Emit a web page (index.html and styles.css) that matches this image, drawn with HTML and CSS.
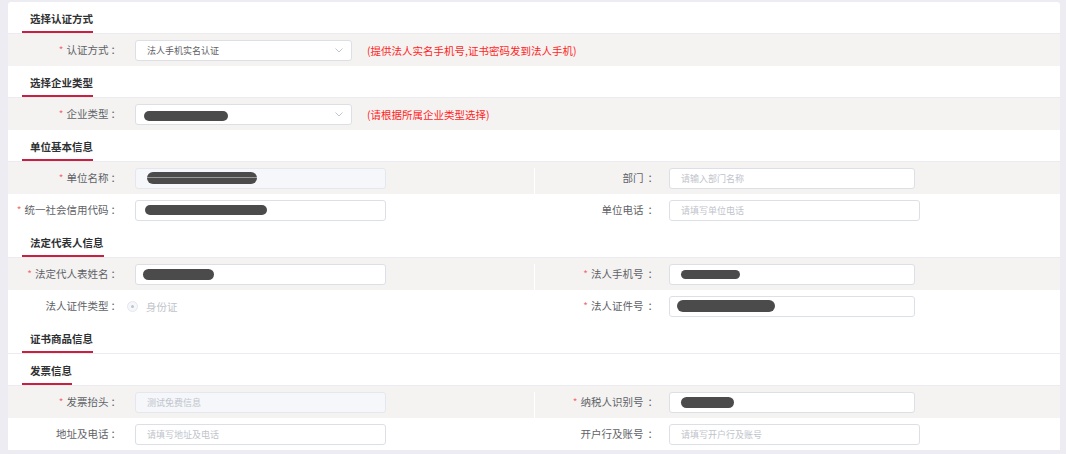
FILE: index.html
```html
<!DOCTYPE html>
<html lang="zh-CN">
<head>
<meta charset="utf-8">
<title>证书申请</title>
<link rel="stylesheet" href="styles.css">
</head>
<body>
<div class="page">
  <div class="card">
    <div class="sec"><h3 class="sec-title">选择认证方式</h3></div>
    <div class="row gray">
      <div class="cell">
        <label class="lbl"><i class="req">*</i>认证方式<span class="colon">：</span></label>
        <div class="select"><span class="val">法人手机实名认证</span><svg class="arrow" width="8" height="5" viewBox="0 0 8 5"><path d="M0.5 0.5 L4 4 L7.5 0.5" fill="none" stroke="#c0c4cc" stroke-width="1"/></svg></div>
        <span class="hint">(提供法人实名手机号,证书密码发到法人手机)</span>
      </div>
    </div>

    <div class="sec"><h3 class="sec-title">选择企业类型</h3></div>
    <div class="row gray">
      <div class="cell">
        <label class="lbl"><i class="req">*</i>企业类型<span class="colon">：</span></label>
        <div class="select"><span class="pill down" style="width:84px;height:10px;margin-left:-3px"></span><svg class="arrow" width="8" height="5" viewBox="0 0 8 5"><path d="M0.5 0.5 L4 4 L7.5 0.5" fill="none" stroke="#c0c4cc" stroke-width="1"/></svg></div>
        <span class="hint">(请根据所属企业类型选择)</span>
      </div>
    </div>

    <div class="sec"><h3 class="sec-title">单位基本信息</h3></div>
    <div class="row gray">
      <div class="cell">
        <label class="lbl"><i class="req">*</i>单位名称<span class="colon">：</span></label>
        <div class="inp disabled"><span class="pill striped" style="width:110px;height:12px;margin-left:0"></span></div>
      </div>
      <div class="cell r">
        <label class="lbl">部门<span class="colon">：</span></label>
        <div class="inp narrow"><span class="ph">请输入部门名称</span></div>
      </div>
    </div>
    <div class="row">
      <div class="cell">
        <label class="lbl"><i class="req">*</i>统一社会信用代码<span class="colon">：</span></label>
        <div class="inp"><span class="pill" style="width:122px;height:10px;margin-left:-2px"></span></div>
      </div>
      <div class="cell r">
        <label class="lbl">单位电话<span class="colon">：</span></label>
        <div class="inp"><span class="ph">请填写单位电话</span></div>
      </div>
    </div>

    <div class="sec"><h3 class="sec-title">法定代表人信息</h3></div>
    <div class="row gray">
      <div class="cell">
        <label class="lbl"><i class="req">*</i>法定代人表姓名<span class="colon">：</span></label>
        <div class="inp"><span class="pill" style="width:71px;height:11px;margin-left:-4px"></span></div>
      </div>
      <div class="cell r">
        <label class="lbl"><i class="req">*</i>法人手机号<span class="colon">：</span></label>
        <div class="inp narrow"><span class="pill" style="width:59px;height:9px;margin-left:0"></span></div>
      </div>
    </div>
    <div class="row">
      <div class="cell">
        <label class="lbl">法人证件类型<span class="colon">：</span></label>
        <div class="radio-group">
          <span class="radio"><span class="radio-dot"></span></span>
          <span class="radio-text">身份证</span>
        </div>
      </div>
      <div class="cell r">
        <label class="lbl"><i class="req">*</i>法人证件号<span class="colon">：</span></label>
        <div class="inp narrow"><span class="pill" style="width:98px;height:12px;margin-left:-4px"></span></div>
      </div>
    </div>

    <div class="sec"><h3 class="sec-title">证书商品信息</h3></div>

    <div class="sec"><h3 class="sec-title">发票信息</h3></div>
    <div class="row gray">
      <div class="cell">
        <label class="lbl"><i class="req">*</i>发票抬头<span class="colon">：</span></label>
        <div class="inp disabled"><span class="ph">测试免费信息</span></div>
      </div>
      <div class="cell r">
        <label class="lbl"><i class="req">*</i>纳税人识别号<span class="colon">：</span></label>
        <div class="inp narrow"><span class="pill" style="width:53px;height:11px;margin-left:0"></span></div>
      </div>
    </div>
    <div class="row">
      <div class="cell">
        <label class="lbl">地址及电话<span class="colon">：</span></label>
        <div class="inp"><span class="ph">请填写地址及电话</span></div>
      </div>
      <div class="cell r">
        <label class="lbl">开户行及账号<span class="colon">：</span></label>
        <div class="inp"><span class="ph">请填写开户行及账号</span></div>
      </div>
    </div>
  </div>
</div>
</body>
</html>
```

FILE: styles.css
```css
* {
  box-sizing: border-box;
  margin: 0;
  padding: 0;
}

html, body {
  background: #edecf2;
}

body {
  font-family: "Noto Sans CJK SC", "Noto Sans", sans-serif;
  font-size: 10.5px;
  color: #606266;
}

.page {
  padding: 2px 6px 0 8px;
  height: 454px;
  overflow: hidden;
}

.card {
  background: #fff;
  border-radius: 3px 3px 0 0;
}

.sec {
  height: 32px;
  display: flex;
  align-items: flex-end;
  padding-left: 14px;
  border-bottom: 1px solid #ebebf0;
}

.sec-title {
  font-size: 10.5px;
  font-weight: bold;
  color: #303133;
  line-height: 14px;
  padding: 0 0 5px 8px;
  border-bottom: 2px solid #c8203e;
}

.row {
  height: 32px;
  display: flex;
}

.row.gray {
  background: #f4f3f2;
}

.cell {
  flex: 1;
  display: flex;
  align-items: center;
}

.cell.r {
  background: linear-gradient(#fff, #fff) 0 6px / 1px 100% no-repeat;
}

.lbl {
  flex: none;
  width: 127px;
  padding-right: 14px;
  text-align: right;
  white-space: nowrap;
  line-height: 14px;
  color: #606266;
}

.cell.r .lbl {
  width: 135px;
  padding-right: 11px;
}

.colon {
  margin-left: 2px;
}

.cell.r .colon {
  margin-left: 4px;
}

.req {
  font-style: normal;
  color: #f56c6c;
  margin-right: 3px;
  font-size: 10px;
}

.select,
.inp {
  flex: none;
  height: 21px;
  border: 1px solid #dcdfe6;
  border-radius: 3px;
  background: #fff;
  display: flex;
  align-items: center;
  padding-left: 11px;
  font-size: 9px;
  color: #606266;
}

.select {
  width: 217px;
  padding-right: 8px;
}

.select .val {
  flex: 1;
}

.select .arrow {
  margin-left: auto;
}

.inp {
  width: 251px;
}

.inp.narrow {
  width: 246px;
}

.inp.disabled {
  background: #f5f7fa;
  border-color: #e4e7ed;
}

.ph {
  color: #c0c4cc;
}

.pill {
  display: inline-block;
  background: #4b4b4b;
  border-radius: 6px;
}

.pill.down {
  margin-top: 3px;
}

.pill.striped {
  background: linear-gradient(#4b4b4b, #4b4b4b) 0 0 / 100% 5px no-repeat,
              linear-gradient(#9a9a9a, #9a9a9a) 0 5px / 100% 1px no-repeat,
              linear-gradient(#4b4b4b, #4b4b4b) 0 6px / 100% 6px no-repeat;
}

.hint {
  margin-left: 15px;
  color: #ff1f1f;
  font-size: 10.5px;
}

.radio-group {
  display: flex;
  align-items: center;
  margin-left: -8px;
}

.radio {
  width: 11px;
  height: 11px;
  border: 1px solid #e4e7ed;
  border-radius: 50%;
  background: #f5f7fa;
  display: flex;
  align-items: center;
  justify-content: center;
}

.radio-dot {
  width: 3px;
  height: 3px;
  border-radius: 50%;
  background: #c0c4cc;
}

.radio-text {
  margin-left: 8px;
  color: #c0c4cc;
  font-size: 10.5px;
}
```
